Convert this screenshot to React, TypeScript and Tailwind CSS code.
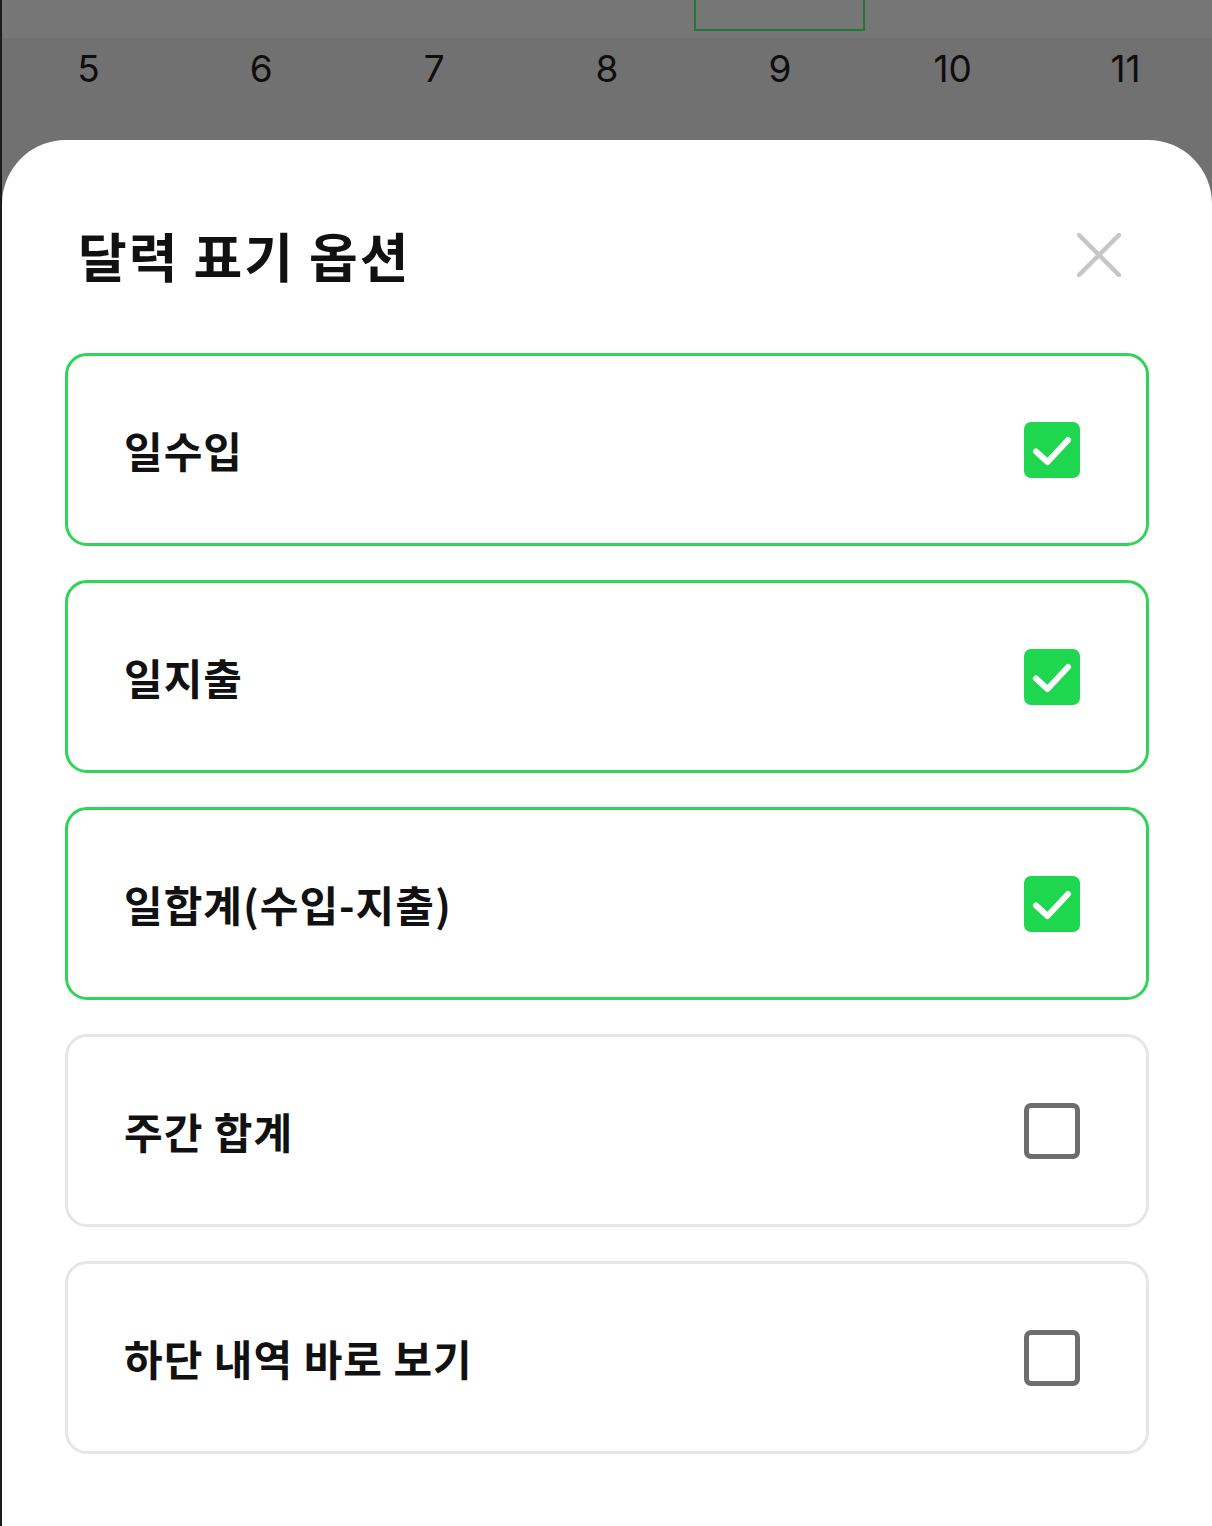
import { useState } from 'react';

const DAYS = [5, 6, 7, 8, 9, 10, 11];

const OPTIONS = [
  { label: '일수입', checked: true },
  { label: '일지출', checked: true },
  { label: '일합계(수입-지출)', checked: true },
  { label: '주간 합계', checked: false },
  { label: '하단 내역 바로 보기', checked: false },
];

function CheckBox({ checked }: { checked: boolean }) {
  if (checked) {
    return (
      <div className="w-[56px] h-[56px] rounded-[7px] bg-[#1fd64f] flex items-center justify-center">
        <svg width="56" height="56" viewBox="0 0 56 56" fill="none">
          <path d="M12 29.5 L23.5 40 L44 18" stroke="white" strokeWidth="6" strokeLinecap="round" strokeLinejoin="round" />
        </svg>
      </div>
    );
  }
  return <div className="w-[56px] h-[56px] rounded-[7px] border-[5px] border-[#6d6d6d] bg-white" />;
}

export default function App() {
  const [opts, setOpts] = useState(OPTIONS);

  const toggle = (i: number) =>
    setOpts((prev) => prev.map((o, j) => (j === i ? { ...o, checked: !o.checked } : o)));

  return (
    <div
      className="w-[1212px] h-[1526px] bg-[#717171] border-l-2 border-[#1c1c1c] flex flex-col overflow-hidden"
      style={{ fontFamily: '"Noto Sans CJK KR", "Noto Sans", sans-serif' }}
    >
      {/* dimmed calendar behind the sheet */}
      <div className="h-[38px] bg-[#767676] grid grid-cols-7 shrink-0">
        {DAYS.map((d) => (
          <div key={d} className="h-full">
            {d === 9 && <div className="h-[33px] -mt-[2px] mx-[1px] border-2 border-[#1f7a35]" />}
          </div>
        ))}
      </div>
      <div className="h-[102px] grid grid-cols-7 shrink-0">
        {DAYS.map((d) => (
          <div
            key={d}
            className="flex justify-center pt-[8px] text-[37px] leading-[46px] text-[#0e0e0e]"
            style={{ fontFamily: 'Inter, "Liberation Sans", sans-serif' }}
          >
            {d}
          </div>
        ))}
      </div>

      {/* bottom sheet */}
      <div className="flex-1 bg-white rounded-t-[64px] px-[63px] pt-[88px]">
        <div className="h-[54px] flex items-center justify-between pl-[13px] pr-[28px]">
          <h2 className="text-[53px] font-bold text-[#111] leading-none tracking-[2px]">달력 표기 옵션</h2>
          <button className="w-[44px] h-[44px] flex items-center justify-center">
            <svg width="44" height="44" viewBox="0 0 44 44" fill="none">
              <path d="M2 2 L42 42 M42 2 L2 42" stroke="#c6c6c6" strokeWidth="4.5" strokeLinecap="round" />
            </svg>
          </button>
        </div>

        <div className="mt-[71px] flex flex-col gap-[34px]">
          {opts.map((o, i) => (
            <div
              key={o.label}
              onClick={() => toggle(i)}
              className={
                'h-[193px] rounded-[22px] border-[3px] flex items-center justify-between pl-[56px] pr-[66px] ' +
                (o.checked ? 'border-[#2fd458]' : 'border-[#e6e6e6]')
              }
            >
              <span className="text-[42px] font-semibold text-[#111] leading-none tracking-[1px]">{o.label}</span>
              <CheckBox checked={o.checked} />
            </div>
          ))}
        </div>
      </div>
    </div>
  );
}
